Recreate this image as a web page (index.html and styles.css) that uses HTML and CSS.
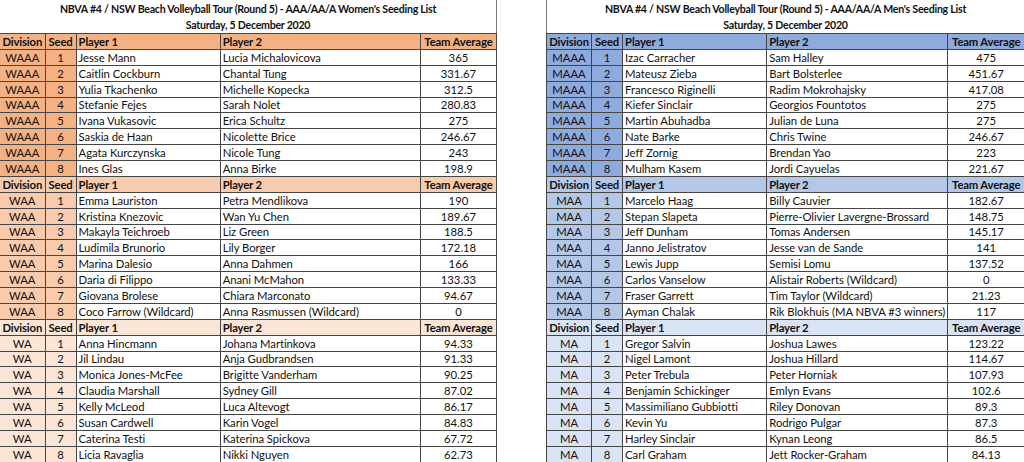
FILE: index.html
```html
<!DOCTYPE html>
<html>
<head>
<meta charset="utf-8">
<link rel="stylesheet" href="styles.css">
</head>
<body>
<div class="page">
  <section class="panel women">
    <div class="title">
      <div class="t1">NBVA #4 / NSW Beach Volleyball Tour (Round 5) - AAA/AA/A Women's Seeding List</div>
      <div class="t2">Saturday, 5 December 2020</div>
    </div>
    <table class="seed">
      <colgroup><col class="c-div"><col class="c-seed"><col class="c-p1"><col class="c-p2w"><col class="c-avg"></colgroup>
      <tbody>
        <tr class="hd s1"><th>Division</th><th>Seed</th><th class="l">Player 1</th><th class="l">Player 2</th><th>Team Average</th></tr>
        <tr class="s1"><td class="k">WAAA</td><td class="k">1</td><td class="l">Jesse Mann</td><td class="l">Lucia Michalovicova</td><td>365</td></tr>
        <tr class="s1"><td class="k">WAAA</td><td class="k">2</td><td class="l">Caitlin Cockburn</td><td class="l">Chantal Tung</td><td>331.67</td></tr>
        <tr class="s1"><td class="k">WAAA</td><td class="k">3</td><td class="l">Yulia Tkachenko</td><td class="l">Michelle Kopecka</td><td>312.5</td></tr>
        <tr class="s1"><td class="k">WAAA</td><td class="k">4</td><td class="l">Stefanie Fejes</td><td class="l">Sarah Nolet</td><td>280.83</td></tr>
        <tr class="s1"><td class="k">WAAA</td><td class="k">5</td><td class="l">Ivana Vukasovic</td><td class="l">Erica Schultz</td><td>275</td></tr>
        <tr class="s1"><td class="k">WAAA</td><td class="k">6</td><td class="l">Saskia de Haan</td><td class="l">Nicolette Brice</td><td>246.67</td></tr>
        <tr class="s1"><td class="k">WAAA</td><td class="k">7</td><td class="l">Agata Kurczynska</td><td class="l">Nicole Tung</td><td>243</td></tr>
        <tr class="s1"><td class="k">WAAA</td><td class="k">8</td><td class="l">Ines Glas</td><td class="l">Anna Birke</td><td>198.9</td></tr>
        <tr class="hd s2"><th>Division</th><th>Seed</th><th class="l">Player 1</th><th class="l">Player 2</th><th>Team Average</th></tr>
        <tr class="s2"><td class="k">WAA</td><td class="k">1</td><td class="l">Emma Lauriston</td><td class="l">Petra Mendlikova</td><td>190</td></tr>
        <tr class="s2"><td class="k">WAA</td><td class="k">2</td><td class="l">Kristina Knezovic</td><td class="l">Wan Yu Chen</td><td>189.67</td></tr>
        <tr class="s2"><td class="k">WAA</td><td class="k">3</td><td class="l">Makayla Teichroeb</td><td class="l">Liz Green</td><td>188.5</td></tr>
        <tr class="s2"><td class="k">WAA</td><td class="k">4</td><td class="l">Ludimila Brunorio</td><td class="l">Lily Borger</td><td>172.18</td></tr>
        <tr class="s2"><td class="k">WAA</td><td class="k">5</td><td class="l">Marina Dalesio</td><td class="l">Anna Dahmen</td><td>166</td></tr>
        <tr class="s2"><td class="k">WAA</td><td class="k">6</td><td class="l">Daria di Filippo</td><td class="l">Anani McMahon</td><td>133.33</td></tr>
        <tr class="s2"><td class="k">WAA</td><td class="k">7</td><td class="l">Giovana Brolese</td><td class="l">Chiara Marconato</td><td>94.67</td></tr>
        <tr class="s2"><td class="k">WAA</td><td class="k">8</td><td class="l">Coco Farrow (Wildcard)</td><td class="l">Anna Rasmussen (Wildcard)</td><td>0</td></tr>
        <tr class="hd s3"><th>Division</th><th>Seed</th><th class="l">Player 1</th><th class="l">Player 2</th><th>Team Average</th></tr>
        <tr class="s3"><td class="k">WA</td><td class="k">1</td><td class="l">Anna Hincmann</td><td class="l">Johana Martinkova</td><td>94.33</td></tr>
        <tr class="s3"><td class="k">WA</td><td class="k">2</td><td class="l">Jil Lindau</td><td class="l">Anja Gudbrandsen</td><td>91.33</td></tr>
        <tr class="s3"><td class="k">WA</td><td class="k">3</td><td class="l">Monica Jones-McFee</td><td class="l">Brigitte Vanderham</td><td>90.25</td></tr>
        <tr class="s3"><td class="k">WA</td><td class="k">4</td><td class="l">Claudia Marshall</td><td class="l">Sydney Gill</td><td>87.02</td></tr>
        <tr class="s3"><td class="k">WA</td><td class="k">5</td><td class="l">Kelly McLeod</td><td class="l">Luca Altevogt</td><td>86.17</td></tr>
        <tr class="s3"><td class="k">WA</td><td class="k">6</td><td class="l">Susan Cardwell</td><td class="l">Karin Vogel</td><td>84.83</td></tr>
        <tr class="s3"><td class="k">WA</td><td class="k">7</td><td class="l">Caterina Testi</td><td class="l">Katerina Spickova</td><td>67.72</td></tr>
        <tr class="s3"><td class="k">WA</td><td class="k">8</td><td class="l">Licia Ravaglia</td><td class="l">Nikki Nguyen</td><td>62.73</td></tr>
      </tbody>
    </table>
  </section>

  <section class="panel men">
    <div class="title">
      <div class="t1">NBVA #4 / NSW Beach Volleyball Tour (Round 5) - AAA/AA/A Men's Seeding List</div>
      <div class="t2">Saturday, 5 December 2020</div>
    </div>
    <table class="seed">
      <colgroup><col class="c-div"><col class="c-seed"><col class="c-p1"><col class="c-p2m"><col class="c-avg"></colgroup>
      <tbody>
        <tr class="hd s1"><th>Division</th><th>Seed</th><th class="l">Player 1</th><th class="l">Player 2</th><th>Team Average</th></tr>
        <tr class="s1"><td class="k">MAAA</td><td class="k">1</td><td class="l">Izac Carracher</td><td class="l">Sam Halley</td><td>475</td></tr>
        <tr class="s1"><td class="k">MAAA</td><td class="k">2</td><td class="l">Mateusz Zieba</td><td class="l">Bart Bolsterlee</td><td>451.67</td></tr>
        <tr class="s1"><td class="k">MAAA</td><td class="k">3</td><td class="l">Francesco Riginelli</td><td class="l">Radim Mokrohajsky</td><td>417.08</td></tr>
        <tr class="s1"><td class="k">MAAA</td><td class="k">4</td><td class="l">Kiefer Sinclair</td><td class="l">Georgios Fountotos</td><td>275</td></tr>
        <tr class="s1"><td class="k">MAAA</td><td class="k">5</td><td class="l">Martin Abuhadba</td><td class="l">Julian de Luna</td><td>275</td></tr>
        <tr class="s1"><td class="k">MAAA</td><td class="k">6</td><td class="l">Nate Barke</td><td class="l">Chris Twine</td><td>246.67</td></tr>
        <tr class="s1"><td class="k">MAAA</td><td class="k">7</td><td class="l">Jeff Zornig</td><td class="l">Brendan Yao</td><td>223</td></tr>
        <tr class="s1"><td class="k">MAAA</td><td class="k">8</td><td class="l">Mulham Kasem</td><td class="l">Jordi Cayuelas</td><td>221.67</td></tr>
        <tr class="hd s2"><th>Division</th><th>Seed</th><th class="l">Player 1</th><th class="l">Player 2</th><th>Team Average</th></tr>
        <tr class="s2"><td class="k">MAA</td><td class="k">1</td><td class="l">Marcelo Haag</td><td class="l">Billy Cauvier</td><td>182.67</td></tr>
        <tr class="s2"><td class="k">MAA</td><td class="k">2</td><td class="l">Stepan Slapeta</td><td class="l">Pierre-Olivier Lavergne-Brossard</td><td>148.75</td></tr>
        <tr class="s2"><td class="k">MAA</td><td class="k">3</td><td class="l">Jeff Dunham</td><td class="l">Tomas Andersen</td><td>145.17</td></tr>
        <tr class="s2"><td class="k">MAA</td><td class="k">4</td><td class="l">Janno Jelistratov</td><td class="l">Jesse van de Sande</td><td>141</td></tr>
        <tr class="s2"><td class="k">MAA</td><td class="k">5</td><td class="l">Lewis Jupp</td><td class="l">Semisi Lomu</td><td>137.52</td></tr>
        <tr class="s2"><td class="k">MAA</td><td class="k">6</td><td class="l">Carlos Vanselow</td><td class="l">Alistair Roberts (Wildcard)</td><td>0</td></tr>
        <tr class="s2"><td class="k">MAA</td><td class="k">7</td><td class="l">Fraser Garrett</td><td class="l">Tim Taylor (Wildcard)</td><td>21.23</td></tr>
        <tr class="s2"><td class="k">MAA</td><td class="k">8</td><td class="l">Ayman Chalak</td><td class="l">Rik Blokhuis (MA NBVA #3 winners)</td><td>117</td></tr>
        <tr class="hd s3"><th>Division</th><th>Seed</th><th class="l">Player 1</th><th class="l">Player 2</th><th>Team Average</th></tr>
        <tr class="s3"><td class="k">MA</td><td class="k">1</td><td class="l">Gregor Salvin</td><td class="l">Joshua Lawes</td><td>123.22</td></tr>
        <tr class="s3"><td class="k">MA</td><td class="k">2</td><td class="l">Nigel Lamont</td><td class="l">Joshua Hillard</td><td>114.67</td></tr>
        <tr class="s3"><td class="k">MA</td><td class="k">3</td><td class="l">Peter Trebula</td><td class="l">Peter Horniak</td><td>107.93</td></tr>
        <tr class="s3"><td class="k">MA</td><td class="k">4</td><td class="l">Benjamin Schickinger</td><td class="l">Emlyn Evans</td><td>102.6</td></tr>
        <tr class="s3"><td class="k">MA</td><td class="k">5</td><td class="l">Massimiliano Gubbiotti</td><td class="l">Riley Donovan</td><td>89.3</td></tr>
        <tr class="s3"><td class="k">MA</td><td class="k">6</td><td class="l">Kevin Yu</td><td class="l">Rodrigo Pulgar</td><td>87.3</td></tr>
        <tr class="s3"><td class="k">MA</td><td class="k">7</td><td class="l">Harley Sinclair</td><td class="l">Kynan Leong</td><td>86.5</td></tr>
        <tr class="s3"><td class="k">MA</td><td class="k">8</td><td class="l">Carl Graham</td><td class="l">Jett Rocker-Graham</td><td>84.13</td></tr>
      </tbody>
    </table>
  </section>
</div>
</body>
</html>
```

FILE: styles.css
```css
html, body {
  margin: 0;
  padding: 0;
  background: #ffffff;
}
body {
  font-family: Lato, "Liberation Sans", sans-serif;
  font-size: 11.3px;
  color: #111111;
  width: 1024px;
  height: 462px;
  overflow: hidden;
}
.page {
  display: flex;
  justify-content: space-between;
  align-items: flex-start;
}
.panel.women {
  width: 497px;
}
.panel.men {
  width: 478px;
}
.title {
  height: 33px;
  display: flex;
  flex-direction: column;
  text-align: center;
  font-weight: bold;
  font-size: 10.6px;
  letter-spacing: -0.25px;
  line-height: 16px;
  padding-top: 1px;
  box-sizing: border-box;
}
.women .title {
  border-right: 1px solid #7a7a7a;
}
.men .title {
  border-left: 1px solid #7a7a7a;
}
.seed {
  border-collapse: collapse;
  table-layout: fixed;
  width: 100%;
}
.c-div { width: 45px; }
.c-seed { width: 31px; }
.c-p1 { width: 144px; }
.c-p2w { width: 200px; }
.c-p2m { width: 181px; }
.c-avg { width: 76px; }
.seed tr {
  height: 15.88px;
}
.seed th, .seed td {
  padding: 0 2px;
  border: 1px solid #454545;
  text-align: center;
  white-space: nowrap;
  overflow: hidden;
  line-height: 13px;
  font-weight: normal;
}
.seed th {
  font-weight: bold;
  letter-spacing: -0.15px;
}
.seed .l {
  text-align: left;
  padding-left: 2px;
  padding-right: 0;
}
.seed td.l {
  letter-spacing: -0.05px;
}
.women .seed th:first-child, .women .seed td:first-child {
  border-left: none;
}
.men .seed th:last-child, .men .seed td:last-child {
  border-right: none;
}
.women .hd.s1, .women .s1 .k { background: #f4b183; }
.women .hd.s2, .women .s2 .k { background: #f8cbad; }
.women .hd.s3, .women .s3 .k { background: #fbe5d6; }
.men .hd.s1, .men .s1 .k { background: #8faadc; }
.men .hd.s2, .men .s2 .k { background: #b4c7e7; }
.men .hd.s3, .men .s3 .k { background: #dae3f3; }
```
